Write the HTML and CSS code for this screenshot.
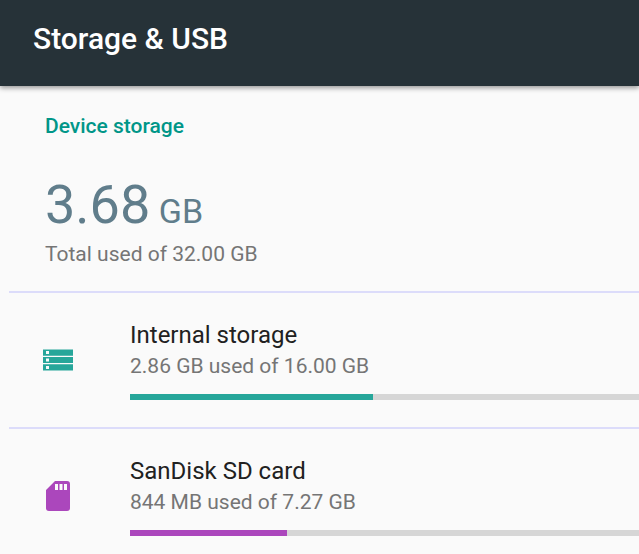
FILE: index.html
```html
<!DOCTYPE html>
<html lang="en">
<head>
<meta charset="utf-8">
<meta name="viewport" content="width=device-width, initial-scale=1">
<title>Storage &amp; USB</title>
<link rel="stylesheet" href="styles.css">
</head>
<body>
<header class="app-bar"><h1 class="title">Storage &amp; USB</h1></header>
<main>
  <section class="summary">
    <h2 class="category">Device storage</h2>
    <p class="total">3.68<span class="unit"> GB</span></p>
    <p class="detail">Total used of 32.00 GB</p>
  </section>
  <ul class="volumes">
    <li class="volume internal">
      <svg class="icon" viewBox="0 0 36 36" aria-hidden="true">
        <path fill="currentColor" fill-rule="evenodd" d="M3 8.5h30v6.2H3zM6 10v3h3v-3zM3 15.9h30v6.2H3zM6 17.5v3h3v-3zM3 23.3h30v6.2H3zM6 25v3h3v-3z"/>
      </svg>
      <div class="info">
        <h3 class="name">Internal storage</h3>
        <p class="detail">2.86 GB used of 16.00 GB</p>
        <div class="track"><div class="fill" style="width: 47.7%"></div></div>
      </div>
    </li>
    <li class="volume card">
      <svg class="icon" viewBox="0 0 36 36" aria-hidden="true">
        <path fill="currentColor" fill-rule="evenodd" d="M15 4h12a3 3 0 0 1 3 3v24a3 3 0 0 1-3 3H9a3 3 0 0 1-3-3V13zM15 7v6h3V7zM19.5 7v6h3V7zM24 7v6h3V7z"/>
      </svg>
      <div class="info">
        <h3 class="name">SanDisk SD card</h3>
        <p class="detail">844 MB used of 7.27 GB</p>
        <div class="track"><div class="fill" style="width: 30.9%"></div></div>
      </div>
    </li>
  </ul>
</main>
</body>
</html>
```
FILE: styles.css
```css
* { box-sizing: border-box; }
body { margin: 0; background: #fafafa; color: #212121; font-family: Roboto, sans-serif; overflow-x: hidden; }
h1, h2, h3, p, ul { margin: 0; padding: 0; }
.app-bar { padding: 21px 33px 29px; background: #263238; color: #fff; box-shadow: 0 2px 5px rgba(0, 0, 0, .4); }
.title { font-size: 30px; line-height: 36px; font-weight: 500; }
.summary { padding: 28px 45px 23px; }
.category { color: #009688; font-size: 21px; line-height: 24px; font-weight: 500; }
.total { margin: 38px 0 6px; color: #607d8b; font-size: 54px; line-height: 58px; }
.unit { font-size: 34px; line-height: 34px; }
.detail { color: #757575; font-size: 21px; line-height: 28px; }
.volumes { margin-left: 9px; list-style: none; }
.volume { display: flex; align-items: center; gap: 54px; padding: 25px 0 27px 31px; border-top: 2px solid #dcdcfa; }
.icon { flex: none; width: 36px; height: 36px; }
.info { flex: 1; }
.name { font-size: 24px; line-height: 34px; font-weight: 400; }
.track { height: 6px; margin-top: 14px; background: #d6d6d6; }
.fill { height: 100%; background: currentColor; }
.internal .icon, .internal .fill { color: #26a69a; }
.card .icon, .card .fill { color: #ab47bc; }
```
